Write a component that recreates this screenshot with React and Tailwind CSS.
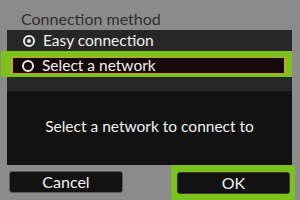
import React from "react";

function Radio({ checked }) {
  return (
    <span className="relative inline-flex h-[12px] w-[12px] shrink-0 items-center justify-center rounded-full border-[2px] border-[#e8e8e8]">
      {checked && <span className="h-[4px] w-[4px] rounded-full bg-[#e8e8e8]" />}
    </span>
  );
}

export default function App() {
  return (
    <div
      className="flex h-[200px] w-[300px] flex-col overflow-hidden bg-[#8b8b8b]"
      style={{ fontFamily: "Lato, 'Open Sans', sans-serif" }}
    >
      <div className="h-[30px] pl-[21px] pt-[9px] text-[16px] leading-[20px] text-[#2f2f2f]">
        Connection method
      </div>
      <div className="ml-[7px] flex h-[135px] w-[285px] flex-col bg-[#121212]">
        <div className="flex h-[61px] flex-col bg-[#272727]">
          <div className="flex h-[21px] items-center gap-[8px] pl-[16px] text-[15.5px] text-[#f0f0f0]">
            <Radio checked />
            <span>Easy connection</span>
          </div>
          <div className="-ml-[6px] flex h-[26px] w-[291px] bg-[#7cc21d] pb-[3px] pl-[10px] pr-[6px] pt-[6px]">
            <div className="flex flex-1 items-center gap-[8px] border-x-2 border-y border-[#c9a227] bg-[#150808] pl-[9px] text-[15.5px] text-[#f0f0f0]">
              <Radio />
              <span>Select a network</span>
            </div>
          </div>
        </div>
        <div className="flex flex-1 items-center justify-center pb-[2px] text-[15.5px] text-[#f0f0f0]">
          Select a network to connect to
        </div>
      </div>
      <div className="flex flex-1 items-end">
        <div className="mb-[7px] ml-[9px] flex h-[22px] w-[114px] items-center justify-center rounded-[3px] border border-[#5a5a5a] bg-[#121212] text-[16px] text-[#f0f0f0]">
          Cancel
        </div>
        <div className="ml-[48px] flex h-[35px] w-[124px] items-center rounded-[2px] bg-[#7cc21d] pl-[6px] pr-[5px]">
          <div className="flex h-[22px] flex-1 items-center justify-center rounded-[3px] border border-[#3a3a3a] bg-[#121212] text-[16px] text-[#f0f0f0]">
            OK
          </div>
        </div>
      </div>
    </div>
  );
}
